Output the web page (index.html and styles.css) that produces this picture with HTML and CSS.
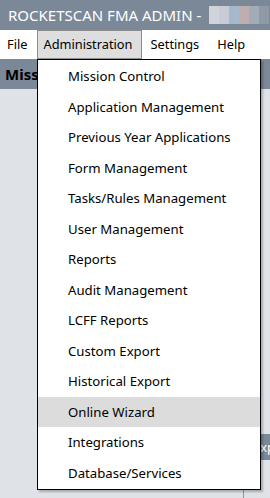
FILE: index.html
```html
<!DOCTYPE html>
<html lang="en">
<head>
    <meta charset="UTF-8">
    <title>RocketScan FMA Admin</title>
    <link rel="stylesheet" href="styles.css">
</head>
<body>
<div class="window">
    <div class="titlebar">
        <span class="title">ROCKETSCAN FMA ADMIN -</span>
        <span class="blur">
            <i class="b1"></i><i class="b2"></i><i class="b3"></i><i class="b4"></i><i class="b5"></i><i class="b6"></i>
        </span>
    </div>
    <div class="menubar">
        <span class="menu first">File</span>
        <span class="menu open">Administration</span>
        <span class="menu">Settings</span>
        <span class="menu">Help</span>
    </div>
    <div class="content">
        <div class="band">Mission Control</div>
        <div class="body">
            <div class="side-tab">Export</div>
            <div class="grid-lines"></div>
        </div>
    </div>

    <ul class="dropdown">
        <li>Mission Control</li>
        <li>Application Management</li>
        <li>Previous Year Applications</li>
        <li>Form Management</li>
        <li>Tasks/Rules Management</li>
        <li>User Management</li>
        <li>Reports</li>
        <li>Audit Management</li>
        <li>LCFF Reports</li>
        <li>Custom Export</li>
        <li>Historical Export</li>
        <li class="hover">Online Wizard</li>
        <li>Integrations</li>
        <li>Database/Services</li>
    </ul>
</div>
</body>
</html>
```
FILE: styles.css
```css
body {
    margin: 0;
    padding: 0;
    font-family: "Noto Sans", "Open Sans", sans-serif;
    color: #000;
}

.window {
    position: relative;
    width: 270px;
    height: 498px;
    overflow: hidden;
    background-color: #dfe3e8;
    display: flex;
    flex-direction: column;
}

.titlebar {
    height: 30px;
    background-color: #7b8898;
    display: flex;
    align-items: center;
    padding-left: 8px;
    white-space: nowrap;
}

.title {
    color: #fff;
    font-size: 15px;
}

.blur {
    display: flex;
    margin-left: 8px;
    height: 18px;
}

.blur i {
    width: 10px;
    height: 18px;
}
.blur .b1 { background-color: #d2d4dc; }
.blur .b2 { background-color: #c9ccd4; }
.blur .b3 { background-color: #a4b9cc; }
.blur .b4 { background-color: #bfaeb0; }
.blur .b5 { background-color: #a3abb6; }
.blur .b6 { background-color: #8e9aa8; }

.menubar {
    height: 29px;
    background-color: #fff;
    display: flex;
    align-items: center;
    font-size: 12.8px;
    white-space: nowrap;
}

.menu {
    padding: 4px 8px 5px 8px;
    border: 1px solid transparent;
    line-height: 17px;
}

.menu.first {
    padding-left: 7px;
    padding-right: 9px;
    border-left: 0;
}

.menu.open {
    background-color: #dedede;
    border-color: #8c8c8c;
    padding: 5px 8px 5px 5px;
}

.content {
    flex: 1;
    display: flex;
    flex-direction: column;
}

.band {
    height: 30px;
    background-color: #7b8898;
    font-weight: bold;
    font-size: 15px;
    line-height: 30px;
    padding-left: 5px;
    white-space: nowrap;
}

.body {
    position: relative;
    flex: 1;
}

.side-tab {
    position: absolute;
    left: 250px;
    top: 345px;
    width: 40px;
    height: 26px;
    background-color: #7b8898;
    color: #fff;
    font-size: 13px;
    line-height: 26px;
    padding-left: 3px;
}

.grid-lines {
    position: absolute;
    left: 243px;
    right: 0;
    bottom: 0;
    height: 10px;
    border-left: 1px solid #8a96a4;
}

.dropdown {
    position: absolute;
    left: 37px;
    top: 59px;
    width: 222px;
    margin: 0;
    padding: 1px 0;
    list-style: none;
    background-color: #fff;
    border: 1px solid #000;
    box-shadow: 2px 2px 2px rgba(0, 0, 0, 0.25);
    font-size: 13.2px;
}

.dropdown li {
    height: 30.5px;
    line-height: 30px;
    padding-left: 30px;
    white-space: nowrap;
}

.dropdown li.hover {
    background-color: #dcdcdc;
}
```
